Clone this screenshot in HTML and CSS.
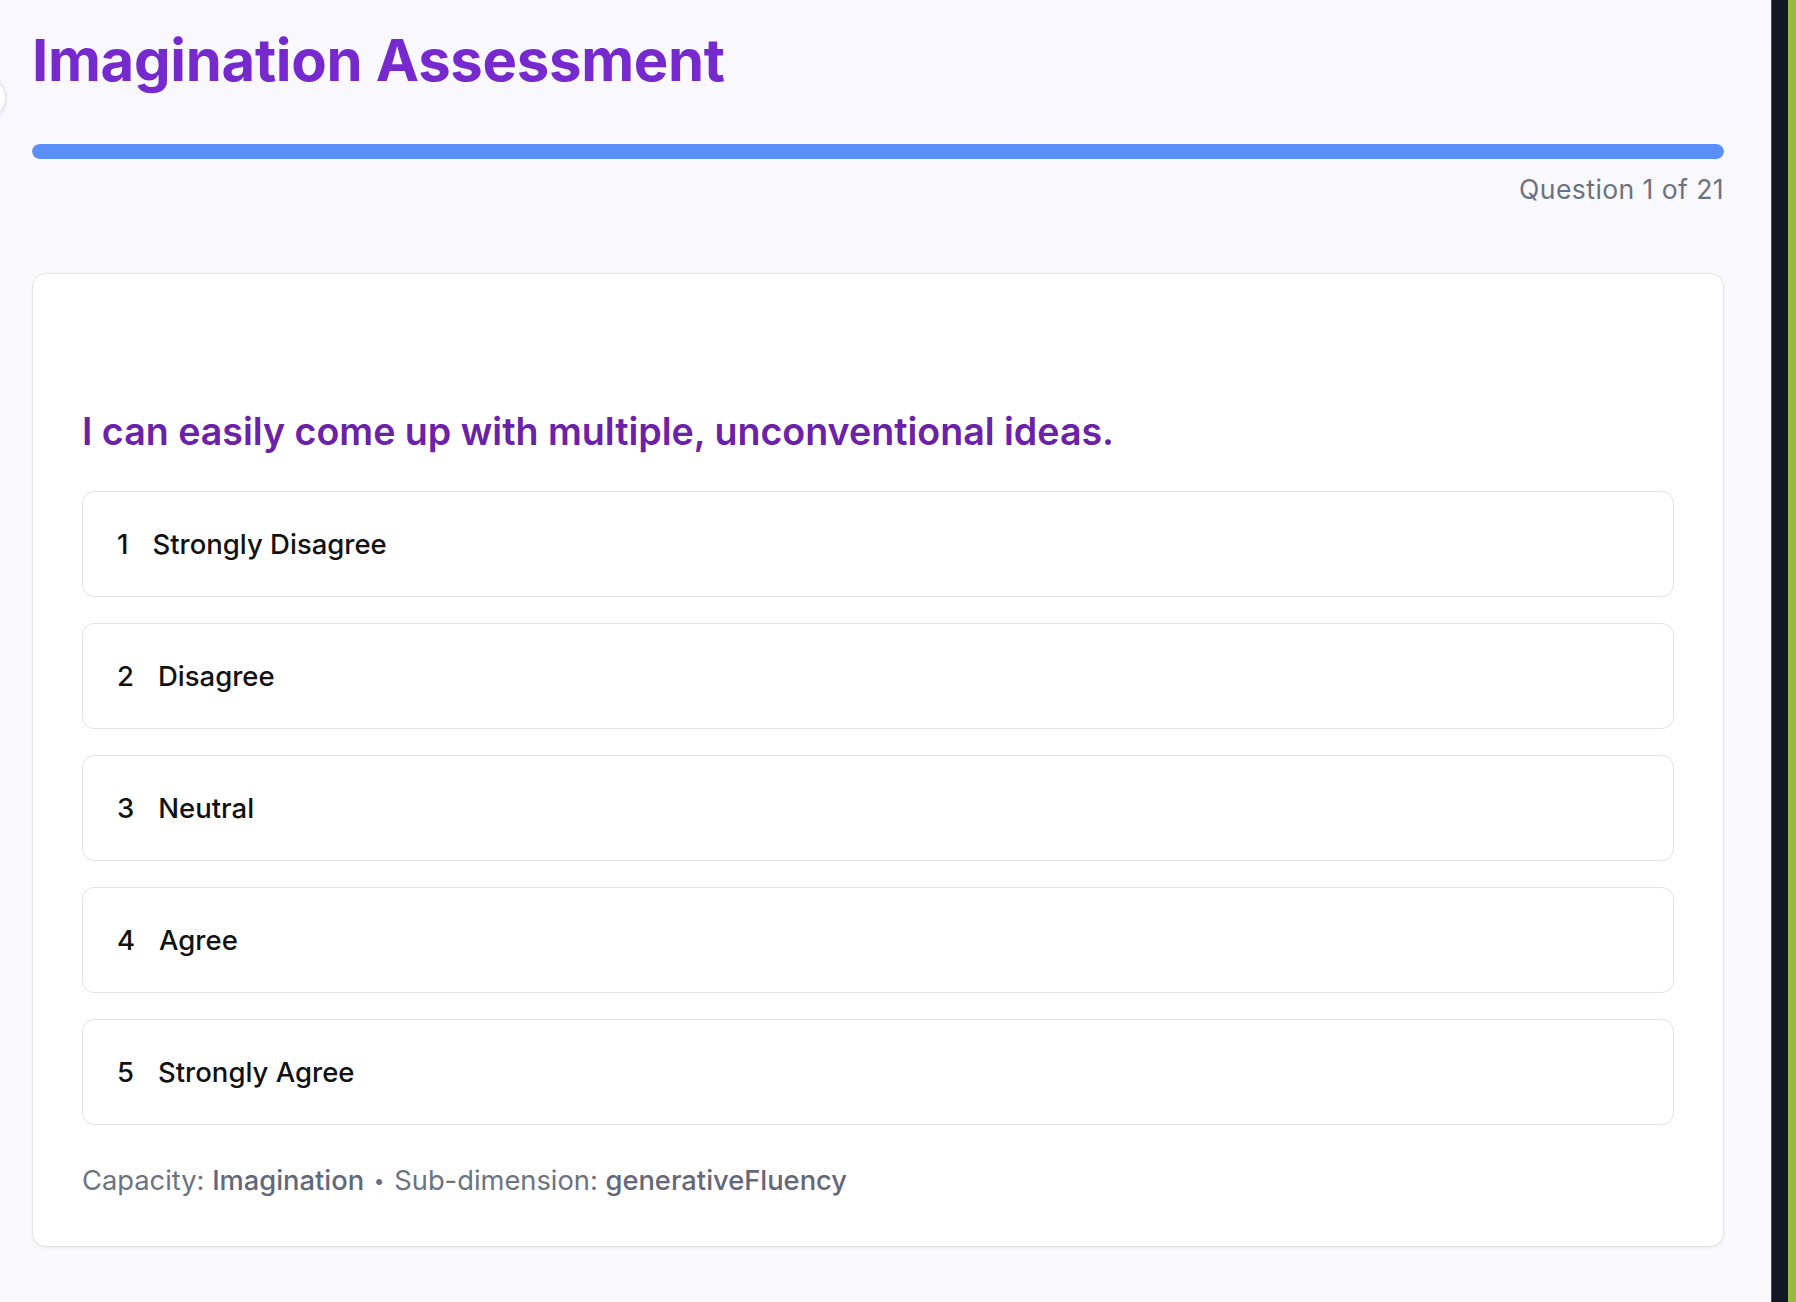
FILE: index.html
```html
<!DOCTYPE html>
<html lang="en">
<head>
<meta charset="utf-8">
<title>Imagination Assessment</title>
<link rel="stylesheet" href="styles.css">
</head>
<body>
<div class="app">
  <main class="page">
    <div class="side-toggle"></div>
    <h1 class="title">Imagination Assessment</h1>
    <div class="progress"><div class="progress-fill" style="width:100%"></div></div>
    <div class="progress-label">Question 1 of 21</div>
    <section class="card">
      <h2 class="question">I can easily come up with multiple, unconventional ideas.</h2>
      <div class="options">
        <button class="option"><span class="opt-num">1</span><span class="opt-label">Strongly Disagree</span></button>
        <button class="option"><span class="opt-num">2</span><span class="opt-label">Disagree</span></button>
        <button class="option"><span class="opt-num">3</span><span class="opt-label">Neutral</span></button>
        <button class="option"><span class="opt-num">4</span><span class="opt-label">Agree</span></button>
        <button class="option"><span class="opt-num">5</span><span class="opt-label">Strongly Agree</span></button>
      </div>
      <p class="meta">Capacity: <span class="meta-val">Imagination</span> <span class="sep">•</span> Sub-dimension: <span class="meta-val">generativeFluency</span></p>
    </section>
  </main>
  <aside class="edge"><div class="edge-dark"></div><div class="edge-green"></div></aside>
</div>
</body>
</html>
```
FILE: styles.css
```css
* { box-sizing: border-box; }
html, body { margin: 0; padding: 0; height: 100%; }
body {
  font-family: Inter, "Noto Sans", "Liberation Sans", sans-serif;
  background: #f9f8fe;
  overflow: hidden;
}
.app {
  display: flex;
  height: 1302px;
}
.page {
  position: relative;
  flex: 1;
  padding: 24px 47px 0 32px;
  background: linear-gradient(#f9f8fe 0%, #f9f9fc 100%);
}
.side-toggle {
  position: absolute;
  left: -34px;
  top: 78px;
  width: 40px;
  height: 40px;
  border-radius: 50%;
  background: #fff;
  border: 1px solid #e4e4ea;
  box-shadow: 0 1px 4px rgba(0,0,0,0.12);
}
.title {
  margin: 0;
  font-size: 58px;
  font-weight: 700;
  line-height: 72px;
  color: #7629cd;
  letter-spacing: -0.3px;
}
.progress {
  margin-top: 48px;
  height: 15px;
  border-radius: 8px;
  background: #e5e7eb;
  overflow: hidden;
}
.progress-fill {
  height: 100%;
  background: #5b8ff9;
  border-radius: 8px;
}
.progress-label {
  margin-top: 12px;
  text-align: right;
  font-size: 26.6px;
  letter-spacing: 0.4px;
  line-height: 36px;
  color: #6b7280;
}
.card {
  margin-top: 66px;
  background: #fff;
  border: 1px solid #e4e4e8;
  border-radius: 14px;
  box-shadow: 0 1px 3px rgba(0,0,0,0.06);
  padding: 134px 49px 44px 49px;
}
.question {
  margin: 0 0 34px 0;
  font-size: 37.6px;
  font-weight: 600;
  line-height: 1.3;
  color: #6b21a8;
}
.options {
  display: flex;
  flex-direction: column;
  gap: 26px;
}
.option {
  display: flex;
  align-items: center;
  height: 106px;
  padding: 0 0 0 34px;
  background: #fff;
  border: 1.5px solid #e4e4e8;
  border-radius: 12px;
  font-family: inherit;
  font-size: 27.5px;
  font-weight: 500;
  color: #111;
  text-align: left;
}
.opt-num {
  margin-right: 24px;
  font-weight: 500;
}
.meta {
  margin: 36px 0 0 0;
  font-size: 27.3px;
  line-height: 1.5;
  color: #6b7280;
}
.meta-val {
  color: #62687a;
  font-weight: 500;
}
.sep {
  font-size: 0.7em;
  margin: 0 2px;
  vertical-align: 2px;
}
.edge {
  display: flex;
  width: 25px;
  border-left: 1px solid #4a3a9a;
}
.edge-dark { width: 16px; background: #121826; }
.edge-green { flex: 1; background: #98bb3f; }
```
